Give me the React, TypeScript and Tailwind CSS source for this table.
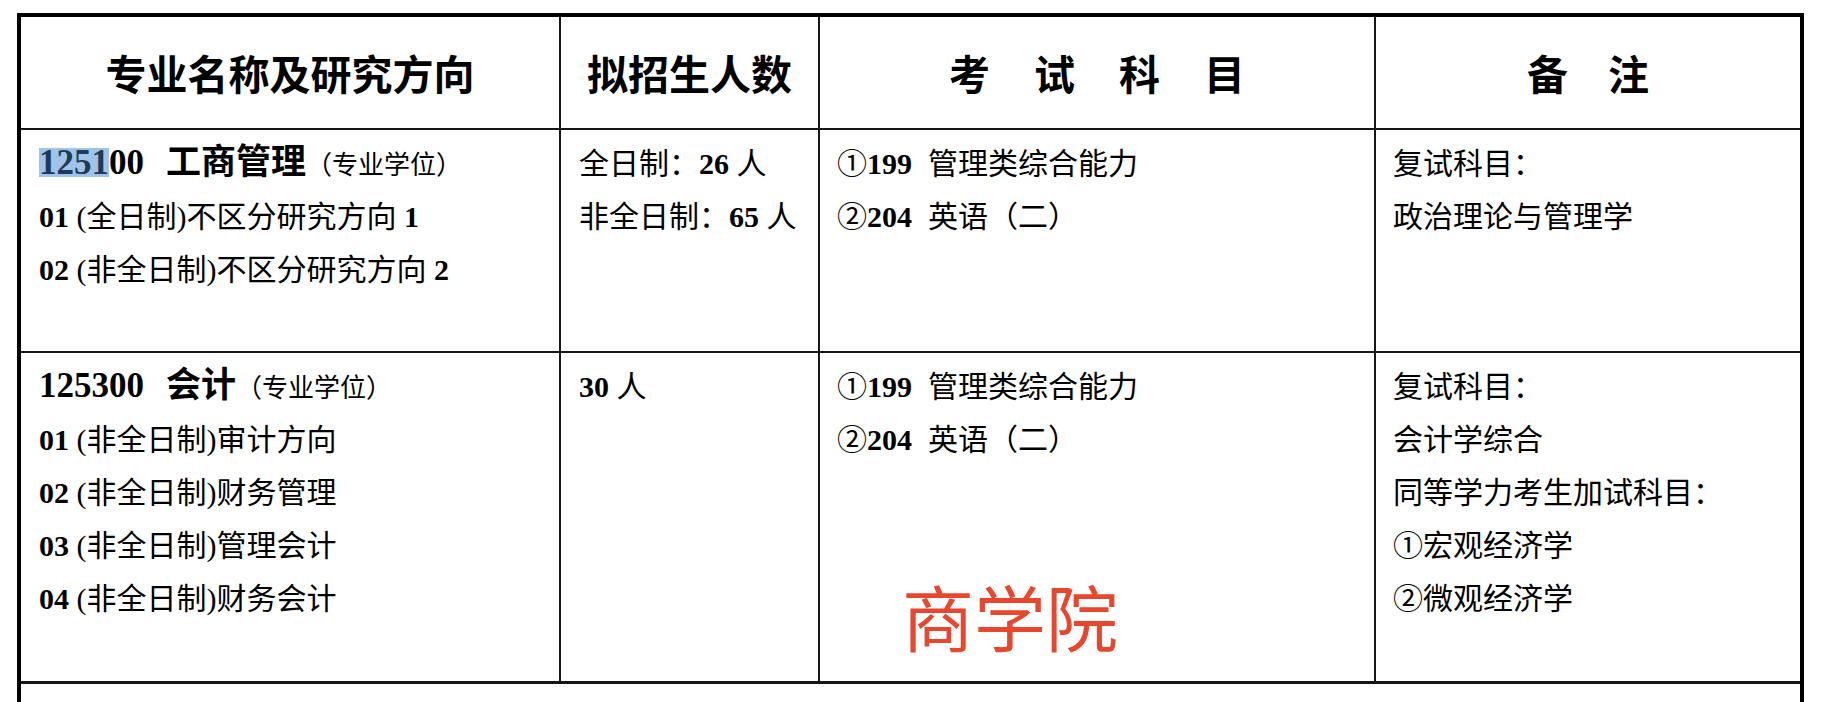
const line = "border-[#161616]";

function B({ children }: { children: React.ReactNode }) {
  return <span className="font-bold">{children}</span>;
}

export default function App() {
  return (
    <div className="h-[702px] overflow-hidden bg-white pl-[17px] pt-[13px] text-black">
      <div className="w-[1787px] border-4 border-black font-['Liberation_Serif','Noto_Sans_CJK_SC',serif] text-[30px]">
        {/* header */}
        <div className={`grid h-[113px] grid-cols-[540px_259px_556px_424px] border-b-2 ${line} font-['Noto_Sans_CJK_SC',sans-serif] text-[41px] font-bold`}>
          <div className={`flex items-center justify-center border-r-2 ${line}`}>专业名称及研究方向</div>
          <div className={`flex items-center justify-center border-r-2 ${line}`}>拟招生人数</div>
          <div className={`flex items-center justify-center gap-[44px] border-r-2 ${line}`}>
            <span>考</span>
            <span>试</span>
            <span>科</span>
            <span>目</span>
          </div>
          <div className="flex items-center justify-center gap-[40px]">
            <span>备</span>
            <span>注</span>
          </div>
        </div>

        {/* 工商管理 */}
        <div className={`grid h-[223px] grid-cols-[540px_259px_556px_424px] border-b-2 ${line} leading-[53px]`}>
          <div className={`border-r-2 ${line} pl-[18px] pt-[7px]`}>
            <div className="whitespace-nowrap">
              <span className="text-[35px] font-bold leading-none">
                <span className="inline-block h-[29px] bg-[#9fc4e7] leading-[29px] text-[#1d3a58]">1251</span>00
              </span>
              <span className="ml-[22px] font-['Noto_Sans_CJK_SC',sans-serif] text-[35px] font-bold leading-none">工商管理</span>
              <span className="text-[26px] leading-none">（专业学位）</span>
            </div>
            <div className="whitespace-nowrap">
              <B>01</B> (全日制)不区分研究方向 <B>1</B>
            </div>
            <div className="whitespace-nowrap">
              <B>02</B> (非全日制)不区分研究方向 <B>2</B>
            </div>
          </div>
          <div className={`border-r-2 ${line} pl-[18px] pt-[7px]`}>
            <div className="whitespace-nowrap">
              全日制：<B>26</B> 人
            </div>
            <div className="whitespace-nowrap">
              非全日制：<B>65</B> 人
            </div>
          </div>
          <div className={`border-r-2 ${line} pl-[17px] pt-[7px]`}>
            <div className="whitespace-nowrap">
              ①<B>199</B>
              <span className="ml-[16px]">管理类综合能力</span>
            </div>
            <div className="whitespace-nowrap">
              ②<B>204</B>
              <span className="ml-[16px]">英语（二）</span>
            </div>
          </div>
          <div className="pl-[17px] pt-[7px]">
            <div>复试科目：</div>
            <div>政治理论与管理学</div>
          </div>
        </div>

        {/* 会计 */}
        <div className={`grid h-[331px] grid-cols-[540px_259px_556px_424px] border-b-[3px] ${line} leading-[53px]`}>
          <div className={`border-r-2 ${line} pl-[18px] pt-[7px]`}>
            <div className="whitespace-nowrap">
              <span className="text-[35px] font-bold leading-none">125300</span>
              <span className="ml-[22px] font-['Noto_Sans_CJK_SC',sans-serif] text-[35px] font-bold leading-none">会计</span>
              <span className="text-[26px] leading-none">（专业学位）</span>
            </div>
            <div className="whitespace-nowrap">
              <B>01</B> (非全日制)审计方向
            </div>
            <div className="whitespace-nowrap">
              <B>02</B> (非全日制)财务管理
            </div>
            <div className="whitespace-nowrap">
              <B>03</B> (非全日制)管理会计
            </div>
            <div className="whitespace-nowrap">
              <B>04</B> (非全日制)财务会计
            </div>
          </div>
          <div className={`border-r-2 ${line} pl-[18px] pt-[7px]`}>
            <div className="whitespace-nowrap">
              <B>30</B> 人
            </div>
          </div>
          <div className={`relative border-r-2 ${line} pl-[17px] pt-[7px]`}>
            <div className="whitespace-nowrap">
              ①<B>199</B>
              <span className="ml-[16px]">管理类综合能力</span>
            </div>
            <div className="whitespace-nowrap">
              ②<B>204</B>
              <span className="ml-[16px]">英语（二）</span>
            </div>
            <div className="absolute left-[82px] top-[226px] font-['Noto_Sans_CJK_SC',sans-serif] text-[72px] leading-none text-[#e9472d]">
              商学院
            </div>
          </div>
          <div className="pl-[17px] pt-[7px]">
            <div>复试科目：</div>
            <div>会计学综合</div>
            <div>同等学力考生加试科目：</div>
            <div>①宏观经济学</div>
            <div>②微观经济学</div>
          </div>
        </div>

        <div className="h-[60px]" />
      </div>
    </div>
  );
}
